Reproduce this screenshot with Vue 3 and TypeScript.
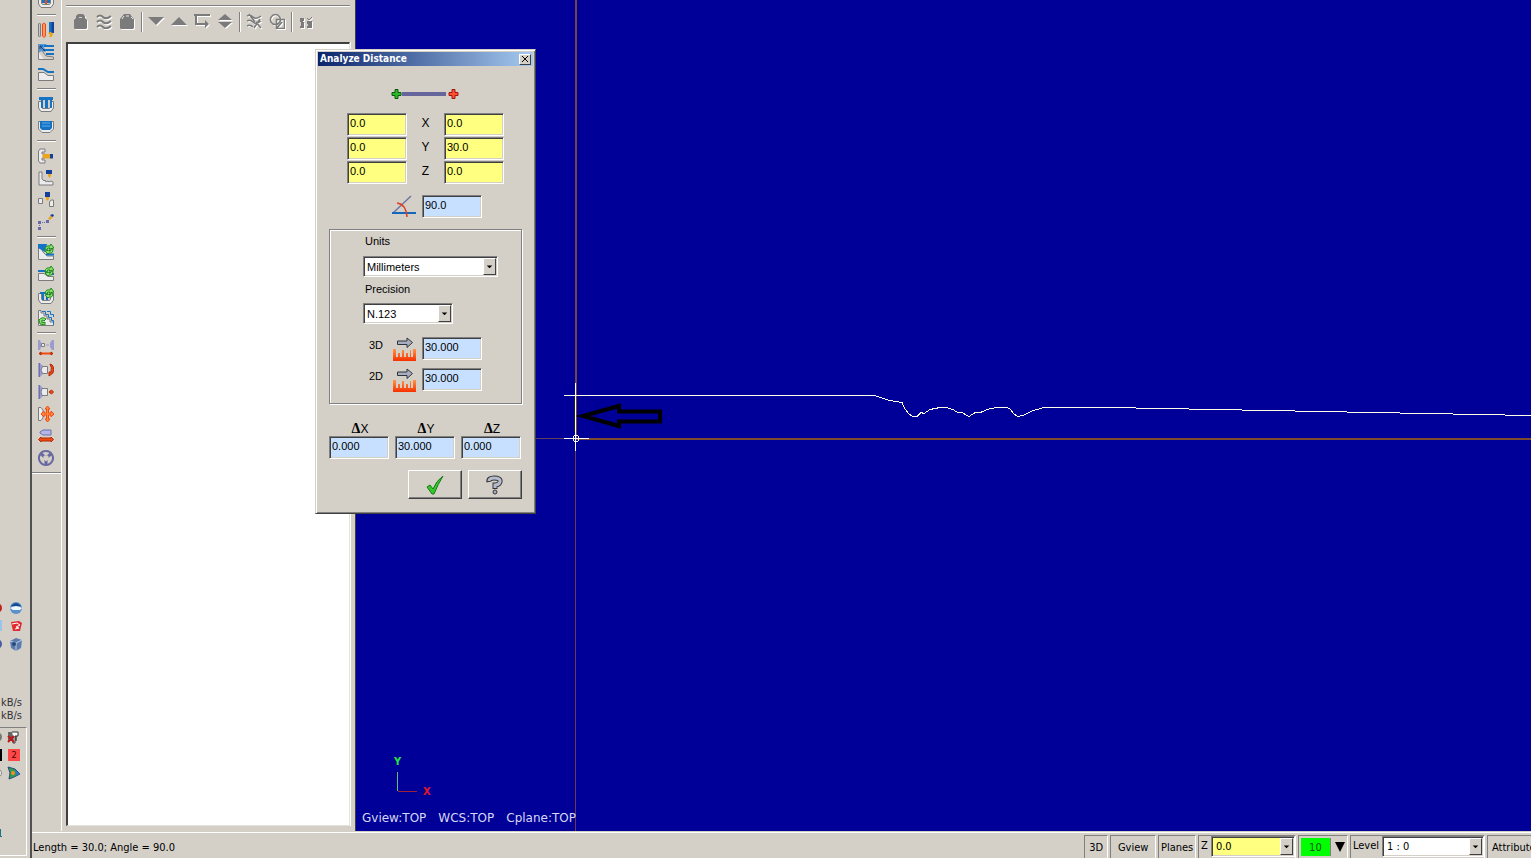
<script setup lang="ts">
import { ref } from 'vue'

interface Shape {
  d: string
  fill?: string
  stroke?: string
  w?: number
}
interface Tool {
  name: string
  shapes: Shape[]
}

const G = '#7c7c7c'
const L = '#ececee'
const B = '#1673c4'
const N = '#12409a'
const O = '#f04a10'
const R = '#b02808'
const Y = '#eaa51c'
const P = '#9a9cd0'
const GR = '#1c8a1c'

const refresh: Shape[] = [
  { d: 'M7 5Q8 1 12 2L13 0L16 4L11 5L12 4Q9 3 9 6Z', fill: '#8fe070', stroke: GR, w: 1 },
  { d: 'M15 5Q15 10 11 9L10 10L7 7L12 6L11 7Q13 8 13 5Z', fill: '#8fe070', stroke: GR, w: 1 },
]
const tray: Shape = { d: 'M3.500 5.500H.5V12L3 15.500H13L15.500 12V5.500H12.500V11L11.500 12.500H4.500L3.500 11Z', fill: L, stroke: G, w: 1 }
const chuck: Shape[] = [
  { d: 'M0 1H2L5 4V12L2 15H0Z', fill: P },
  { d: 'M1.500 1V15', stroke: '#6e70ac', w: 1 },
]

const toolGroups: Tool[][] = [
  [
    { name: 'Pocket', shapes: [tray, { d: 'M4 5H7V11H4ZM9 5H12V11H9Z', fill: B }, { d: 'M7 7H9V12H7Z', fill: O }] },
  ],
  [
    {
      name: 'Tools',
      shapes: [
        { d: 'M.5 2L1.500 1L2.500 2V14L1.500 15L.5 14Z', fill: '#c8c8c8', stroke: G, w: 1 },
        { d: 'M4.500 2L6 1L7.500 2V14L6 15.500L4.500 14Z', fill: '#ff9a70', stroke: O, w: 1 },
        { d: 'M11 0H15V11H11Z', fill: B },
        { d: 'M13.500 0H16V11H13.500Z', fill: N },
        { d: 'M10 11L12 10L15 11L14 15H11L12 13Z', fill: Y },
      ],
    },
    {
      name: 'Rough',
      shapes: [
        { d: 'M.5 8L6 15.500H.5Z', fill: L },
        { d: 'M0 0H9L6 3L8 8L4 7L0 9Z', fill: '#4e9cdc' },
        { d: 'M.5 .5V15.500H15.500V13L8 12L5 8L2 2', stroke: G, w: 1 },
        { d: 'M6 2H16M5 6H16M8 10H16', stroke: B, w: 2 },
        { d: 'M2 2L7 7M2 2V5M2 2H5', stroke: N, w: 1 },
      ],
    },
    {
      name: 'Finish',
      shapes: [
        { d: 'M.5 6.500H6L10 9.500H15.500V14.500H.5Z', fill: L, stroke: G, w: 1 },
        { d: 'M0 3H5L10 6H16', stroke: B, w: 2 },
      ],
    },
  ],
  [
    { name: 'Groove', shapes: [tray, { d: 'M1 1H15V4H14V12H12V4H10V12H7V4H5V12H3V4H1Z', fill: B }] },
    {
      name: 'Groove finish',
      shapes: [
        { d: 'M.5 3.500H15.500V11L12 14.500H4L.5 11Z', fill: L, stroke: G, w: 1 },
        { d: 'M2 3H14V10L12 12H4L2 10Z', fill: B },
        { d: 'M4 5H12M4 8H12', stroke: '#5eb0ea', w: 1 },
      ],
    },
  ],
  [
    {
      name: 'Drill',
      shapes: [
        { d: 'M7 1H2L.5 3V13L2 15H7V12H4V10H7V6H4V4H7Z', fill: L, stroke: G, w: 1 },
        { d: 'M4 8L6 6H12V10.500H6Z', fill: Y },
        { d: 'M12 6H15V10.500H12Z', fill: N },
      ],
    },
    {
      name: 'Thread',
      shapes: [
        { d: 'M1 2H4V9L6 11L7 10L8 12L10 11L11 12L13 11L15 12V15H1Z', fill: L, stroke: G, w: 1 },
        { d: 'M8 0H14V4H8Z', fill: N },
        { d: 'M10 4H13V6L11.500 8L10 6Z', fill: Y },
      ],
    },
    {
      name: 'Cutoff',
      shapes: [
        { d: 'M.5 6.500H4.500V11.500H.5ZM11.500 10L13 8H15.500V14.500H11.500Z', fill: L, stroke: G, w: 1 },
        { d: 'M7 0H12V5H7Z', fill: N },
        { d: 'M8 5H11V7L9.500 9L8 7Z', fill: Y },
      ],
    },
    {
      name: 'Point',
      shapes: [
        { d: 'M0 7H3V10H0ZM8 6H11V9H8ZM0 13H3V16H0Z', fill: '#6769a8' },
        { d: 'M4.500 8V9M6.500 8V9M1 11.500H2', stroke: '#6769a8', w: 1 },
        { d: 'M10 5L12 2L15 3L12 6Z', fill: Y },
        { d: 'M12 1L15 0L16 2L14 3Z', fill: N },
      ],
    },
  ],
  [
    {
      name: 'Canned rough',
      shapes: [
        { d: 'M.5 .5V15.500H15.500V12H9L5 8L2 2', fill: L, stroke: G, w: 1 },
        { d: 'M0 0H9L7 8L0 4Z', fill: B },
        { d: 'M8 10.500H16', stroke: B, w: 2 },
        ...refresh,
      ],
    },
    {
      name: 'Canned finish',
      shapes: [
        { d: 'M.5 7.500H6L10 10.500H15.500V14.500H.5Z', fill: L, stroke: G, w: 1 },
        { d: 'M0 5H7L10 8H16', stroke: B, w: 2 },
        ...refresh,
      ],
    },
    { name: 'Canned groove', shapes: [tray, { d: 'M2 4H10V12H8V6H6V12H4V6H2Z', fill: B }, ...refresh] },
    {
      name: 'Pattern repeat',
      shapes: [
        { d: 'M.5 .5V15.500H15.500V12H12V9H9V6H6V3H3V.5Z', fill: L, stroke: G, w: 1 },
        { d: 'M4 1.500H7.500V4.500H10.500V7.500H13.500V10.500H15.500V15M9 1.500H12.500V4.500H15.500V7', stroke: B, w: 1 },
        { d: 'M1 10Q4 6 8 9L6 11L4 10V13L7 12V15L2 14Z', fill: '#8fe070', stroke: GR, w: 1 },
      ],
    },
  ],
  [
    {
      name: 'Stock transfer',
      shapes: [
        { d: 'M0 0H2L3 3V7L2 10H0ZM16 0H14L12 3V7L14 10H16Z', fill: P },
        { d: 'M3.500 3.500H6.500V6.500H3.500Z', fill: L, stroke: G, w: 1 },
        { d: 'M8 5H11', stroke: P, w: 1 },
        { d: 'M3 13.500H13', stroke: O, w: 2 },
        { d: 'M1 13.500L3 12V15ZM15 13.500L13 12V15Z', fill: O, stroke: R, w: 1 },
      ],
    },
    {
      name: 'Stock flip',
      shapes: [
        ...chuck,
        { d: 'M4.500 4.500H9.500V11.500H4.500L3 8Z', fill: L, stroke: G, w: 1 },
        { d: 'M12 2Q17 3 15 11L11 14L11 10H13Q14 5 12 2Z', fill: O, stroke: R, w: 1 },
      ],
    },
    {
      name: 'Stock advance',
      shapes: [
        ...chuck,
        { d: 'M4 4.500H9.500V11.500H4L3 8Z', fill: L, stroke: G, w: 1 },
        { d: 'M11 8L13.500 6L15.500 8L13.500 10Z', fill: O, stroke: R, w: 1 },
      ],
    },
    {
      name: 'Chuck',
      shapes: [
        { d: 'M.5 1.500H3L5 4V12L3 14.500H.5Z', fill: L, stroke: G, w: 1 },
        { d: 'M9.500 0L12 3H10.500V7H13V5L16 8L13 11V9H10.500V13H12L9.500 16L7 13H8.500V9H6V11L3 8L6 5V7H8.500V3H7Z', fill: '#ff8a40', stroke: O, w: 1 },
      ],
    },
    {
      name: 'Tailstock',
      shapes: [
        { d: 'M2 4L5 2H13V7H5L2 5Z', fill: '#b4b6e4', stroke: '#6e70ac', w: 1 },
        { d: 'M.5 11.500L3 9V10H13V9L15.500 11.500L13 14V13H3V14Z', fill: O, stroke: R, w: 1 },
      ],
    },
    {
      name: 'Steady rest',
      shapes: [
        { d: 'M8 1A7 7 0 1 1 7.900 1', stroke: '#6769a0', w: 2 },
        { d: 'M3 4L7 7M13 4L9 7M8 15V10', stroke: '#6769a0', w: 3 },
        { d: 'M6 6H10V9L8 11L6 9Z', fill: '#d4d0c8', stroke: '#d4d0c8', w: 1 },
      ],
    },
  ],
]

const D = '#7b7b7b'
const managerGroups: Tool[][] = [
  [
    { name: 'Lock', shapes: [{ d: 'M1 7L3 5V3L5 1H10L12 3V5L14 7V15L13 16H2L1 15Z', fill: D }, { d: 'M6 5V4H9V5Z', fill: '#d4d0c8' }] },
    { name: 'Toggle display', shapes: [{ d: 'M1 4Q4 1 7 4T15 3M1 9Q4 6 7 9T15 8M1 14Q4 11 7 14T15 13', stroke: D, w: 2 }] },
    { name: 'Lock posting', shapes: [{ d: 'M1 6L5 1H11L15 6V15L14 16H2L1 15Z', fill: D }, { d: 'M3 6L5 3M7 3H10M12 4L14 6', stroke: '#e8e8e4', w: 1 }] },
  ],
  [
    { name: 'Move down', shapes: [{ d: 'M0 4H16L8 12Z', fill: D }] },
    { name: 'Move up', shapes: [{ d: 'M0 12H16L8 4Z', fill: D }] },
    { name: 'Insert position', shapes: [{ d: 'M0 1H16V3H3V10H11V7L15 11L11 15V12H1V3H0Z', fill: D }] },
    { name: 'Scroll to insert', shapes: [{ d: 'M8 1L15 7H1ZM1 9H15L8 15Z', fill: D }] },
  ],
  [
    { name: 'Hide toolpath', shapes: [{ d: 'M1 3Q4 1 7 4T15 3M1 8Q4 6 7 9T15 8M1 13Q4 11 7 14M3 1L9 9M10 9L15 15M14 6L8 15', stroke: D, w: 1.5 }] },
    { name: 'Geometry only', shapes: [{ d: 'M6.500 1.500A5 5 0 1 1 6.400 1.500M7.500 6.500H15.500V15.500H7.500ZM8 15L13 9', stroke: D, w: 1.5 }] },
  ],
  [
    { name: 'Options', shapes: [{ d: 'M2 5H6V8H5V9H6V15H2V13H3V9H2ZM9 8H14V15H9V13H10V11H9Z', fill: D }, { d: 'M9 5L11 7L14 4', stroke: D, w: 1 }] },
  ],
]

const start = ref(['0.0', '0.0', '0.0'])
const end = ref(['0.0', '30.0', '0.0'])
const axes = ['X', 'Y', 'Z']
const angle = ref('90.0')
const units = ref('Millimeters')
const precision = ref('N.123')
const lengths = ref([
  { label: '3D', value: '30.000' },
  { label: '2D', value: '30.000' },
])
const deltas = ref([
  { axis: 'X', value: '0.000' },
  { axis: 'Y', value: '30.000' },
  { axis: 'Z', value: '0.000' },
])
const depth = ref('0.0')
const level = ref('1 : 0')
const open = ref(true)
</script>

<template>
  <div class="screen">
    <aside class="desk">
      <div class="launchers">
        <div class="pair">
          <svg class="half" viewBox="0 0 8 16"><circle cx="-3" cy="8" r="5" fill="#c02020" /></svg>
          <svg class="mini" viewBox="0 0 16 16"><circle cx="8" cy="8" r="6" fill="#5a92cc" /><path d="M3 6Q8 0 13 6L8 8Z" fill="#124a8c" /><path d="M2 8Q8 4 14 8L12 10L5 10Z" fill="#eef6ff" /></svg>
        </div>
        <div class="pair">
          <svg class="half" viewBox="0 0 8 16"><path d="M0 2H2V13H0Z" fill="#9cc4ea" /></svg>
          <svg class="mini" viewBox="0 0 16 16"><path d="M3 4L11 3L14 5L12 13L5 13Z" fill="#e02b30" /><path d="M4 6L9 5L12 7L8 9L11 10L7 11" fill="none" stroke="#fff" /></svg>
        </div>
        <div class="pair">
          <svg class="half" viewBox="0 0 8 16"><circle cx="-3" cy="8" r="5" fill="#4a5aa8" /></svg>
          <svg class="mini" viewBox="0 0 16 16"><path d="M2 5L8 2L14 4L13 12L8 15L3 12Z" fill="#5c7cac" /><path d="M2 5L8 7L14 4M8 7V15" fill="none" stroke="#b4cce8" /><circle cx="6" cy="8" r="2" fill="#25477c" /></svg>
        </div>
      </div>
      <div class="speed"><span>kB/s</span><span>kB/s</span></div>
      <div class="tray">
        <div class="pair">
          <svg class="half" viewBox="0 0 8 16"><circle cx="-3" cy="8" r="5" fill="#777" /></svg>
          <svg class="mini" viewBox="0 0 16 16"><path d="M2 3H11V12H2Z" fill="#666" /><path d="M6 3H12V7H9V14H7V7" fill="#fff" stroke="#333" /><path d="M2 7L8 13M8 7L2 13" stroke="#c01818" stroke-width="2" /></svg>
        </div>
        <div class="pair">
          <svg class="half" viewBox="0 0 8 16"><path d="M0 2H2V14H0Z" fill="#000" /></svg>
          <span class="badge">2</span>
        </div>
        <div class="pair">
          <svg class="half" viewBox="0 0 8 16"><circle cx="-3" cy="8" r="4.500" fill="#eee" stroke="#888" /></svg>
          <svg class="mini" viewBox="0 0 16 16"><path d="M2 2L9 4L14 9L8 12L3 14L4 8Z" fill="#2f9a50" stroke="#2b4a80" /><circle cx="7" cy="8" r="2" fill="#f09020" /><path d="M9 5L14 9L10 10Z" fill="#2a78d0" /></svg>
        </div>
        <svg class="clock" viewBox="0 0 2 8"><path d="M0 0H1V7H2V8H0Z" fill="#1c7484" /></svg>
      </div>
    </aside>

    <div class="app">
      <div class="main">
        <nav class="toolbar" aria-label="Lathe toolpaths">
          <div v-for="(group, g) in toolGroups" :key="g" class="tool-group">
            <button v-for="t in group" :key="t.name" type="button" class="tool" :aria-label="t.name">
              <svg viewBox="0 0 16 16">
                <path v-for="(s, i) in t.shapes" :key="i" :d="s.d" :fill="s.fill ?? 'none'" :stroke="s.stroke ?? 'none'" :stroke-width="s.w ?? 0" />
              </svg>
            </button>
          </div>
        </nav>

        <section class="manager" aria-label="Operations">
          <div class="manager-bar">
            <div v-for="(group, g) in managerGroups" :key="g" class="manager-group">
              <button v-for="t in group" :key="t.name" type="button" class="op" :aria-label="t.name">
                <svg viewBox="0 0 16 16">
                  <path v-for="(s, i) in t.shapes" :key="i" :d="s.d" :fill="s.fill ?? 'none'" :stroke="s.stroke ?? 'none'" :stroke-width="s.w ?? 0" />
                </svg>
              </button>
            </div>
          </div>
          <div class="tree"></div>
        </section>

        <main class="view">
          <svg class="drawing" shape-rendering="crispEdges">
            <path d="M220 0V438" stroke="#764447" stroke-width="2" fill="none" />
            <line x1="219.500" y1="438" x2="219.500" y2="100%" stroke="#70384a" />
            <line x1="0" y1="438.500" x2="220" y2="438.500" stroke="#5e4058" />
            <line x1="220" y1="439" x2="100%" y2="439" stroke="#7d4b30" stroke-width="2" />
            <path
              d="M208 395.500H519L524 397.500L534 400.500L546 402.500L549 409L553 414L557 416.500H561L565 412.500L568 413.500L574 409.500L584 407.500H590L598 410L602 413L605 412L613 416.500L620 412L623 413L634 408.500L642 407.500H651L654 409L658 414L662 416.500L667 415.500L676 411L688 407.500H754L1175 415.500L1900 429"
              stroke="#ffffe8" fill="none"
            />
            <path d="M219.500 383V451M208 438.500H233" stroke="#fff" fill="none" />
            <path d="M218.500 397V432" stroke="#222208" fill="none" />
            <circle cx="220" cy="438.500" r="3" stroke="#fff" fill="none" />
            <path d="M227 416L263 406V411.500H304V421.500H263V426Z" stroke="#000" stroke-width="4" fill="none" shape-rendering="auto" />
          </svg>
          <div class="view-footer">
            <div class="triad">
              <span class="axis-y">Y</span>
              <div class="triad-row">
                <svg viewBox="0 0 20 20" shape-rendering="crispEdges"><path d="M.5 0V19" stroke="#5cc07c" /><path d="M1 19.500H20" stroke="#a02038" /></svg>
                <span class="axis-x">X</span>
              </div>
            </div>
            <div class="planes"><span>Gview:TOP</span><span>WCS:TOP</span><span>Cplane:TOP</span></div>
          </div>
        </main>
      </div>

      <footer class="status">
        <span class="message">Length = 30.0; Angle = 90.0</span>
        <button type="button" class="cell w24">3D</button>
        <button type="button" class="cell w46">Gview</button>
        <button type="button" class="cell w38">Planes</button>
        <div class="cell combo-cell">
          <label for="depth">Z</label>
          <span class="combo depth">
            <select id="depth" v-model="depth"><option>0.0</option></select>
            <svg class="arrow" viewBox="0 0 12 16"><path d="M3 7H9L6 10Z" /></svg>
          </span>
        </div>
        <div class="cell colour-cell">
          <button type="button" class="swatch">10</button>
          <button type="button" class="drop" aria-label="Choose colour"><svg viewBox="0 0 10 10"><path d="M0 0H10L5 10Z" /></svg></button>
        </div>
        <div class="cell combo-cell">
          <label for="level">Level</label>
          <span class="combo level">
            <select id="level" v-model="level"><option>1 : 0</option></select>
            <svg class="arrow" viewBox="0 0 12 16"><path d="M3 7H9L6 10Z" /></svg>
          </span>
        </div>
        <button type="button" class="cell last">Attributes</button>
      </footer>
    </div>

    <section v-if="open" class="dialog" role="dialog" aria-label="Analyze Distance">
      <header class="title">
        <h1>Analyze Distance</h1>
        <button type="button" class="close" aria-label="Close" @click="open = false">
          <svg viewBox="0 0 8 8"><path d="M1 1L7 7M7 1L1 7" stroke="#000" /></svg>
        </button>
      </header>
      <div class="body">
        <svg class="segment" viewBox="0 0 68 12">
          <path d="M11 6H55" stroke="#66669c" stroke-width="4" />
          <path d="M4 1.500H7V4.500H10V7.500H7V10.500H4V7.500H1V4.500H4Z" fill="#2eb52e" stroke="#085c08" />
          <path d="M61 1.500H64V4.500H67V7.500H64V10.500H61V7.500H58V4.500H61Z" fill="#ff5032" stroke="#a41408" />
        </svg>
        <div class="points">
          <template v-for="(a, i) in axes" :key="a">
            <input :id="'start-' + a" v-model="start[i]" class="field yellow" type="text">
            <label :for="'start-' + a">{{ a }}</label>
            <input v-model="end[i]" class="field yellow" type="text" :aria-label="'End ' + a">
          </template>
        </div>
        <div class="angle">
          <svg viewBox="0 0 24 23"><path d="M1 18L19 1" stroke="#7373a4" stroke-width="1.500" /><path d="M0 18H24" stroke="#1268be" stroke-width="2" /><path d="M5 8Q14 9 15 22" fill="none" stroke="#e04020" stroke-width="1.500" /></svg>
          <input v-model="angle" class="field blue" type="text" aria-label="Angle">
        </div>
        <div class="group">
          <label for="units">Units</label>
          <span class="combo units">
            <select id="units" v-model="units"><option>Millimeters</option><option>Inches</option></select>
            <svg class="arrow" viewBox="0 0 12 16"><path d="M3 7H9L6 10Z" /></svg>
          </span>
          <label for="precision">Precision</label>
          <span class="combo precision">
            <select id="precision" v-model="precision"><option>N.123</option><option>N.12</option></select>
            <svg class="arrow" viewBox="0 0 12 16"><path d="M3 7H9L6 10Z" /></svg>
          </span>
          <div class="lengths">
            <div v-for="l in lengths" :key="l.label" class="length">
              <label :for="'len-' + l.label">{{ l.label }}</label>
              <svg viewBox="0 0 24 24">
                <defs><linearGradient :id="'heat' + l.label" x1="0" y1="0" x2="0" y2="1"><stop offset="0" stop-color="#ff9448" /><stop offset="1" stop-color="#f83000" /></linearGradient></defs>
                <path d="M0 12H3V20H5V16H7V20H9V13H11V20H13V16H15V20H17V13H18V20H20V12H23V24H0Z" :fill="'url(#heat' + l.label + ')'" />
                <path d="M4.500 4H14V1L19.500 5.500L14 10.500V7.500H4.500Z" fill="#a9adbf" stroke="#30343c" />
              </svg>
              <input :id="'len-' + l.label" v-model="l.value" class="field blue" type="text">
            </div>
          </div>
        </div>
        <div class="deltas">
          <div v-for="d in deltas" :key="d.axis" class="delta">
            <label :for="'delta-' + d.axis"><b>Δ</b>{{ d.axis }}</label>
            <input :id="'delta-' + d.axis" v-model="d.value" class="field blue" type="text">
          </div>
        </div>
        <div class="actions">
          <button type="button" class="push" aria-label="OK" @click="open = false">
            <svg viewBox="0 0 20 20"><path d="M2 12L5 10L8 14Q11 6 18 1Q13 9 9 19H7Z" fill="#35c82c" stroke="#157a18" /></svg>
          </button>
          <button type="button" class="push" aria-label="Help">
            <svg viewBox="0 0 20 20">
              <path d="M4 7Q3 3 9 3Q16 3 15 7Q14 10 10 10V14" fill="none" stroke="#34363c" stroke-width="5" />
              <path d="M4 6Q4 3 9 3Q16 3 15 7Q14 10 10 10V13" fill="none" stroke="#b6bccc" stroke-width="3" />
              <circle cx="10" cy="17" r="2" fill="#a8aebe" stroke="#34363c" />
            </svg>
          </button>
        </div>
      </div>
    </section>
  </div>
</template>

<style>
html,
body {
  margin: 0;
  overflow: hidden;
}
</style>

<style scoped>
.screen {
  --face: #d4d0c8;
  position: relative;
  display: flex;
  width: 100%;
  height: 100vh;
  overflow: hidden;
  background: var(--face);
  color: #000;
  font: 11px/13px "DejaVu Sans Condensed", "Noto Sans", sans-serif;
}
*,
*::before {
  box-sizing: border-box;
}
svg {
  display: block;
}
button {
  margin: 0;
  padding: 0;
  border: 0;
  background: none;
  color: inherit;
  font: inherit;
}
.desk {
  flex: none;
  display: flex;
  flex-direction: column;
  justify-content: flex-end;
  width: 30px;
  overflow: hidden;
}
.pair {
  display: flex;
  align-items: center;
  gap: 0;
  height: 18px;
}
.half {
  width: 8px;
  height: 16px;
}
.mini {
  width: 16px;
  height: 16px;
}
.launchers {
  margin-bottom: 43px;
}
.speed {
  display: flex;
  flex-direction: column;
  padding-left: 1px;
  margin-bottom: 5px;
  color: #333;
}
.tray {
  height: 129px;
  margin: 0 3px 2px 0;
  border: 1px solid #fff;
  border-top-color: #808080;
  border-left: 0;
}
.tray .mini {
  margin-left: -2px;
}
.clock {
  width: 2px;
  height: 8px;
  margin-top: 47px;
}
.badge {
  width: 12px;
  height: 12px;
  background: #ff4848;
  color: #400;
  font-size: 9px;
  line-height: 12px;
  text-align: center;
}
.app {
  flex: 1;
  display: flex;
  flex-direction: column;
  min-width: 0;
  border-left: 2px solid #505050;
}
.main {
  flex: 1;
  display: flex;
  min-height: 0;
}
.toolbar {
  flex: none;
  width: 30px;
  border-right: 1px solid #fff;
}
.tool-group {
  display: flex;
  flex-direction: column;
  align-items: center;
  padding-right: 1px;
}
.tool-group:first-child .tool {
  height: 11px;
  align-items: flex-end;
}
.tool-group:first-child svg {
  margin-bottom: 3px;
}
.tool-group + .tool-group::before {
  content: "";
  width: 19px;
  height: 2px;
  margin: 3px 0;
  background: linear-gradient(#808080 50%, #fff 50%);
}
.tool-group:last-child {
  padding-bottom: 3px;
  border-bottom: 1px solid #808080;
  box-shadow: 0 1px #fff;
}
.tool {
  display: flex;
  align-items: center;
  justify-content: center;
  width: 22px;
  height: 22px;
}
.tool svg,
.op svg {
  flex: none;
  width: 16px;
  height: 16px;
}
.manager {
  flex: none;
  display: flex;
  flex-direction: column;
  width: 294px;
  padding: 5px 5px 5px 4px;
  border-right: 1px solid #404040;
}
.manager-bar {
  display: flex;
  height: 37px;
  padding: 4px 0 0 3px;
  border-top: 1px solid #808080;
  box-shadow: inset 0 1px #fff;
}
.manager-group {
  display: flex;
}
.manager-group + .manager-group::before {
  content: "";
  width: 2px;
  height: 20px;
  margin: 2px 1px 0 3px;
  background: linear-gradient(90deg, #808080 50%, #fff 50%);
}
.op {
  display: flex;
  justify-content: center;
  width: 23px;
  height: 22px;
  padding-top: 3px;
}
.op svg {
  filter: drop-shadow(1px 1px 0 #fff);
}
.tree {
  flex: 1;
  background: #fff;
  border: 2px solid #404040;
  border-right: 1px solid #e4e2dc;
  border-bottom: 1px solid #e4e2dc;
  box-shadow: 1px 0 #fff;
}
.view {
  flex: 1;
  position: relative;
  display: flex;
  flex-direction: column;
  justify-content: flex-end;
  min-width: 0;
  background: #000099;
  overflow: hidden;
}
.drawing {
  position: absolute;
  inset: 0;
  width: 100%;
  height: 100%;
}
.view-footer {
  position: relative;
  padding: 0 0 6px 6px;
}
.triad {
  margin: 0 0 19px 32px;
  font-weight: bold;
}
.axis-y {
  display: block;
  color: #28e040;
}
.triad-row {
  display: flex;
  gap: 6px;
  margin: 4px 0 0 3px;
}
.triad-row svg {
  width: 20px;
  height: 20px;
}
.axis-x {
  align-self: flex-end;
  margin-bottom: -6px;
  color: #e01828;
}
.planes {
  display: flex;
  gap: 12px;
  color: #d6d8f0;
  font: 12px/14px "DejaVu Sans", sans-serif;
  white-space: nowrap;
}
.status {
  flex: none;
  display: flex;
  align-items: stretch;
  gap: 2px;
  height: 27px;
  padding-top: 3px;
  border-top: 1px solid #d4d0c8;
  box-shadow: inset 0 1px #fff;
  overflow: hidden;
  white-space: nowrap;
}
.message {
  flex: 1;
  padding: 6px 0 0 1px;
}
.cell {
  flex: none;
  height: 23px;
  border: 1px solid #808080;
  border-right-color: #fff;
  border-bottom: 0;
  overflow: hidden;
}
.w24 {
  width: 24px;
}
.w46 {
  width: 46px;
}
.w38 {
  width: 38px;
}
.last {
  width: 44px;
  padding-left: 4px;
  border-right: 0;
  text-align: left;
}
.combo-cell,
.colour-cell {
  display: flex;
  gap: 3px;
  padding-left: 2px;
}
.combo-cell label {
  padding-top: 3px;
}
.combo {
  position: relative;
  display: block;
  height: 21px;
  background: #fff;
  border: 1px solid #808080;
  border-right-color: #fff;
  border-bottom-color: #fff;
  box-shadow: inset 1px 1px #404040, inset -1px -1px #d4d0c8;
}
.combo select {
  appearance: none;
  display: block;
  width: 100%;
  height: 100%;
  margin: 0;
  padding: 0 14px 0 4px;
  border: 0;
  border-radius: 0;
  background: none;
  color: #000;
  font: inherit;
}
.group .combo select {
  padding: 2px 14px 0 3px;
}
.arrow {
  position: absolute;
  top: 1px;
  right: 1px;
  bottom: 1px;
  width: 13px;
  height: 17px;
  background: var(--face);
  border: 1px solid #fff;
  border-right-color: #404040;
  border-bottom-color: #404040;
  pointer-events: none;
}
.combo.depth {
  width: 84px;
  background: #ffff80;
}
.combo.level {
  width: 102px;
}
.colour-cell {
  width: 50px;
  align-items: center;
  gap: 4px;
}
.swatch {
  width: 30px;
  height: 18px;
  background: #00ff00;
  border-right: 1px solid #808080;
  color: #145014;
}
.drop svg {
  width: 10px;
  height: 10px;
}
.dialog {
  position: absolute;
  left: 315px;
  top: 49px;
  width: 221px;
  padding: 1px 0 0 1px;
  background: var(--face);
  border: 1px solid #d4d0c8;
  border-right-color: #404040;
  border-bottom-color: #404040;
  box-shadow: inset 1px 1px #fff, inset -1px -1px #808080;
  font-family: "Liberation Sans", Arial, sans-serif;
}
.title {
  display: flex;
  align-items: center;
  justify-content: space-between;
  height: 14px;
  margin: 1px 2px 0 1px;
  padding: 0 2px;
  background: linear-gradient(90deg, #0a246a, #a6caf0);
}
.title h1 {
  margin: 0;
  color: #fff;
  font: bold 10px/14px "DejaVu Sans Condensed", sans-serif;
}
.close {
  display: flex;
  align-items: center;
  justify-content: center;
  width: 12px;
  height: 11px;
  background: var(--face);
  border: 1px solid #fff;
  border-right-color: #404040;
  border-bottom-color: #404040;
}
.close svg {
  width: 8px;
  height: 8px;
}
.body {
  padding: 22px 13px 14px 12px;
}
.segment {
  width: 68px;
  height: 12px;
  margin-left: 62px;
}
.field {
  width: 60px;
  height: 23px;
  margin: 0;
  padding: 0 2px 4px;
  border: 1px solid #808080;
  border-right-color: #fff;
  border-bottom-color: #fff;
  border-radius: 0;
  box-shadow: inset 1px 1px #404040, inset -1px -1px #d4d0c8;
  color: #000;
  font: inherit;
}
.yellow {
  background: #ffff80;
}
.blue {
  background: #c8e0ff;
}
.points {
  display: grid;
  grid-template-columns: 60px 37px 60px;
  gap: 1px 0;
  align-items: center;
  margin: 13px 0 0 18px;
  text-align: center;
}
.points label {
  padding-bottom: 2px;
  font-size: 12px;
}
.angle {
  display: flex;
  gap: 6px;
  margin: 11px 0 0 63px;
}
.angle svg {
  width: 24px;
  height: 23px;
}
.group {
  height: 175px;
  margin-top: 11px;
  padding: 5px 0 0 33px;
  border: 1px solid #808080;
  box-shadow: inset 1px 1px #fff, 1px 1px #fff;
}
.group > label {
  display: block;
  margin-left: 2px;
}
.units {
  width: 135px;
  margin: 8px 0 6px;
}
.precision {
  width: 90px;
  margin-top: 7px;
}
.lengths {
  display: grid;
  gap: 8px;
  margin: 13px 0 0 6px;
}
.length {
  display: flex;
  height: 23px;
}
.length label {
  width: 24px;
  padding-top: 2px;
}
.length svg {
  width: 24px;
  height: 24px;
  margin-right: 5px;
}
.deltas {
  display: flex;
  gap: 6px;
  margin-top: 18px;
}
.delta {
  display: flex;
  flex-direction: column;
  text-align: center;
}
.delta label {
  padding-left: 2px;
  font-size: 12px;
}
.delta b {
  font: bold 14px/13px "Liberation Serif", serif;
}
.actions {
  display: flex;
  justify-content: flex-end;
  gap: 6px;
  margin-top: 11px;
}
.push {
  display: flex;
  align-items: center;
  justify-content: center;
  width: 54px;
  height: 29px;
  border: 1px solid #fff;
  border-right-color: #404040;
  border-bottom-color: #404040;
  box-shadow: inset -1px -1px #808080;
}
.push svg {
  width: 20px;
  height: 20px;
}
</style>
